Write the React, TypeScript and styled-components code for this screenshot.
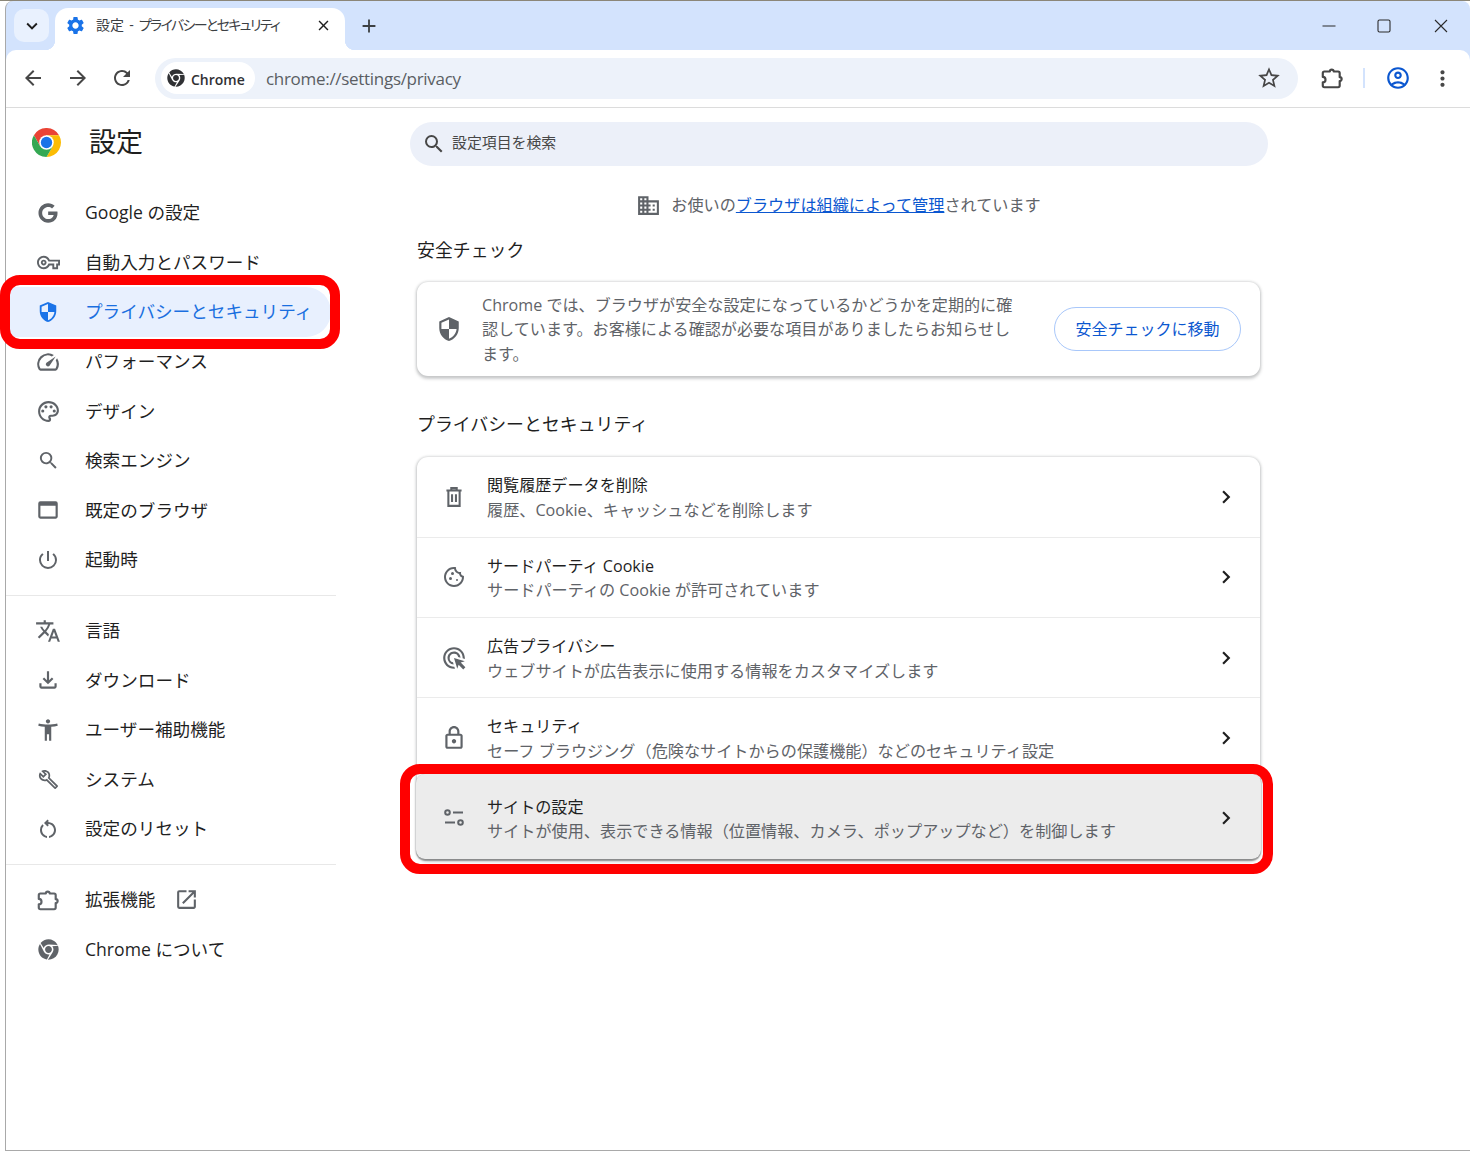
import React from "react";
import styled, { createGlobalStyle } from "styled-components";
import { FaChrome, FaGoogle } from "react-icons/fa";
import {
  MdAccessibilityNew, MdAdd, MdArrowBack, MdArrowForward, MdChevronRight, MdClose, MdDomain, MdKeyboardArrowDown,
  MdMoreVert, MdOutlineAccountCircle, MdOutlineAdsClick, MdOutlineBuild, MdOutlineCookie,
  MdOutlineFileDownload, MdOutlineLock, MdOutlineOpenInNew, MdOutlinePalette, MdOutlineRestartAlt,
  MdOutlineSpeed, MdOutlineVpnKey, MdOutlineWebAsset, MdPowerSettingsNew, MdRefresh, MdSearch, MdSecurity, MdSettings,
  MdStarBorder, MdTranslate,
} from "react-icons/md";

const Global = createGlobalStyle`
  html, body { margin: 0; padding: 0; background: #fff; }
  body { font-family: "Open Sans", "Noto Sans CJK JP", sans-serif; color: #1f1f1f; }
  * { box-sizing: border-box; }
`;

const Page = styled.div`
  position: relative;
  width: 1470px;
  height: 1152px;
  overflow: hidden;
  padding: 1px 0 0 5px;
  background: #fff;
  &::before {
    content: "";
    position: absolute;
    top: 0;
    left: 0;
    right: 0;
    height: 1px;
    background: #8b8678;
  }
`;

const Window = styled.div`
  width: 1465px;
  height: 1150px;
  display: flex;
  flex-direction: column;
  border-left: 1px solid #a9a9a9;
  border-bottom: 1px solid #a9a9a9;
  border-top-left-radius: 8px;
  border-top-right-radius: 8px;
  overflow: hidden;
  background: #d3e3fd;
`;

const TitleBar = styled.div`
  height: 49px;
  flex: none;
  display: flex;
  align-items: flex-end;
  padding-left: 8px;
  color: #1f1f1f;
`;

const TabSearch = styled.div`
  width: 35px;
  height: 33px;
  margin-bottom: 8px;
  border-radius: 10px;
  background: #e9f1fe;
  display: flex;
  align-items: center;
  justify-content: center;
`;

const Tab = styled.div`
  position: relative;
  width: 290px;
  height: 42px;
  margin-left: 6px;
  padding: 0 13px 8px 10px;
  background: #fff;
  border-radius: 13px 13px 0 0;
  display: flex;
  align-items: center;
  &::before, &::after {
    content: "";
    position: absolute;
    bottom: 0;
    width: 10px;
    height: 10px;
  }
  &::before { left: -10px; background: radial-gradient(circle at 0 0, transparent 10px, #fff 10.5px); }
  &::after { right: -10px; background: radial-gradient(circle at 100% 0, transparent 10px, #fff 10.5px); }
`;

const TabFavicon = styled(MdSettings)`
  color: #1a73e8;
  flex: none;
`;

const TabTitle = styled.span`
  margin: -2px 0 0 10px;
  flex: 1;
  font-size: 14px;
  word-spacing: 1.5px;
  color: #3c4043;
  white-space: nowrap;
`;

const TabTitleKana = styled.span`
  font-feature-settings: "palt";
  letter-spacing: -1.65px;
`;

const NewTab = styled.div`
  margin: 0 0 12px 12px;
  width: 24px;
  height: 24px;
  display: flex;
  align-items: center;
  justify-content: center;
  color: #3c4043;
`;

const WindowControls = styled.div`
  margin-left: auto;
  display: flex;
  align-items: center;
  height: 49px;
  padding-right: 21px;
  gap: 41px;
  color: #2b2b2b;
`;

const ControlIcon = styled.svg<{ $nudge?: number }>`
  width: 16px;
  height: 16px;
  display: block;
  fill: none;
  stroke: currentColor;
  stroke-width: 1.1;
  margin-right: ${(p) => p.$nudge ?? 0}px;
`;

const Toolbar = styled.div`
  height: 58px;
  flex: none;
  display: flex;
  align-items: center;
  padding: 0 15px 1px 14px;
  background: #fff;
  border-bottom: 1px solid #dcdcdc;
  border-radius: 10px 10px 0 0;
`;

const ToolIcon = styled.div<{ $gap?: number; $color?: string }>`
  width: 26px;
  height: 26px;
  margin-left: ${(p) => p.$gap ?? 0}px;
  display: flex;
  align-items: center;
  justify-content: center;
  flex: none;
  color: ${(p) => p.$color ?? "#474747"};
`;

const Omnibox = styled.div`
  width: 1143px;
  height: 41px;
  margin-left: 20px;
  flex: none;
  border-radius: 21px;
  background: #edf2fa;
  display: flex;
  align-items: center;
  padding: 0 16px 0 6px;
`;

const Chip = styled.div`
  height: 32px;
  width: 94px;
  border-radius: 16px;
  background: #fff;
  display: flex;
  align-items: center;
  gap: 6px;
  padding-left: 6px;
  font-size: 14px;
  font-weight: 600;
  color: #303134;
  span { margin-top: 2px; }
`;

const Url = styled.span`
  margin: 1px 0 0 11px;
  flex: 1;
  font-size: 17px;
  letter-spacing: -0.3px;
  color: #5a5e63;
`;

const ToolDivider = styled.div`
  width: 2px;
  height: 20px;
  margin-left: 18px;
  background: #d3e3fd;
  flex: none;
`;

const Body = styled.div`
  flex: 1;
  display: flex;
  background: #fff;
  min-height: 0;
`;

const Sidebar = styled.nav`
  width: 330px;
  flex: none;
`;

const Brand = styled.div`
  height: 80px;
  padding: 0 0 11px 26px;
  display: flex;
  align-items: center;
  gap: 28px;
  font-size: 27px;
  color: #1f1f1f;
  span { margin-top: -4px; }
`;

const NavItem = styled.div<{ $active?: boolean }>`
  height: 49.6px;
  width: ${(p) => (p.$active ? "325px" : "330px")};
  display: flex;
  align-items: center;
  padding-left: 29px;
  gap: 24px;
  font-size: 17.6px;
  color: ${(p) => (p.$active ? "#1a6fe0" : "#1f1f1f")};
  background: ${(p) => (p.$active ? "#e8f0fe" : "transparent")};
  border-radius: ${(p) => (p.$active ? "0 25px 25px 0" : "0")};
  svg { color: ${(p) => (p.$active ? "#1a73e8" : "#5f6368")}; }
`;

const NavIcon = styled.span`
  width: 26px;
  height: 26px;
  flex: none;
  display: flex;
  align-items: center;
  justify-content: center;
`;

const NavLabel = styled.span`
  margin-top: -2px;
`;

const NavDivider = styled.hr`
  margin: 10px 0;
  border: 0;
  border-top: 1px solid #e8e8e8;
`;

const ExternalIcon = styled(MdOutlineOpenInNew)`
  margin-left: -5px;
`;

const Main = styled.main`
  flex: 1;
  padding: 14px 0 0 74px;
`;

const SearchBox = styled.div`
  width: 858px;
  height: 44px;
  border-radius: 22px;
  background: #ecf0f9;
  display: flex;
  align-items: center;
  padding-left: 12px;
  gap: 6px;
  font-size: 14.9px;
  color: #474747;
  svg { color: #474747; flex: none; }
  span { margin-top: -5px; }
`;

const Column = styled.div`
  width: 843px;
  margin-left: 7px;
`;

const Managed = styled.div`
  margin-top: 26px;
  height: 26px;
  display: flex;
  justify-content: center;
  align-items: center;
  gap: 10px;
  font-size: 16.15px;
  color: #5f6368;
  svg { color: #5f6368; }
  span { margin-top: -2px; }
  a { color: #0b57d0; text-decoration: underline; }
`;

const SectionTitle = styled.h2<{ $top: number }>`
  margin: ${(p) => p.$top}px 0 0 0;
  height: 26px;
  line-height: 26px;
  font-size: 17.9px;
  font-weight: 400;
  color: #1f1f1f;
`;

const SafetyCard = styled.section`
  margin-top: 19px;
  height: 94px;
  border-radius: 11px;
  background: #fff;
  box-shadow: 0 1.5px 3px 1px rgba(60, 64, 67, 0.25), 0 0 3px rgba(60, 64, 67, 0.12);
  display: flex;
  align-items: center;
  padding: 0 19px 0 19px;
  svg { color: #5f6368; flex: none; }
`;

const SafetyText = styled.p`
  margin: 1px 0 0 20px;
  width: 535px;
  font-size: 16.1px;
  line-height: 24.6px;
  color: #5f6368;
`;

const PillButton = styled.div`
  margin-left: auto;
  width: 187px;
  height: 44px;
  padding-bottom: 2px;
  border-radius: 22px;
  border: 1.3px solid #a8c7fa;
  display: flex;
  align-items: center;
  justify-content: center;
  font-size: 16px;
  color: #0b57d0;
`;

const ListCard = styled.section`
  margin-top: 20px;
  height: 402px;
  border-radius: 11px;
  background: #fff;
  box-shadow: 0 1.5px 3px 1px rgba(60, 64, 67, 0.25), 0 0 3px rgba(60, 64, 67, 0.12);
`;

const Row = styled.div<{ $highlight?: boolean }>`
  position: relative;
  height: ${(p) => (p.$highlight ? "85px" : "80.3px")};
  margin: ${(p) => (p.$highlight ? "-3px -1px 0" : "0")};
  padding: ${(p) => (p.$highlight ? "3px 22px 0 15px" : "0 21px 0 14px")};
  display: flex;
  align-items: center;
  gap: 13px;
  background: ${(p) => (p.$highlight ? "#ececec" : "transparent")};
  border-top: ${(p) => (p.$highlight ? "0" : "1px solid #ebebeb")};
  border-radius: ${(p) => (p.$highlight ? "9px" : "0")};
  box-shadow: ${(p) => (p.$highlight ? "0 0 2px rgba(0,0,0,.3), 0 2px 1px rgba(0,0,0,.25)" : "none")};
  &:first-child { border-top: 0; height: 79.6px; }
`;

const RowIcon = styled.div`
  width: 46px;
  display: flex;
  justify-content: center;
  flex: none;
  color: #5f6368;
`;

const RowText = styled.div`
  flex: 1;
  margin-left: -3px;
  padding-top: 2px;
`;

const RowTitle = styled.div`
  font-size: 16.1px;
  line-height: 24.6px;
  color: #1f1f1f;
`;

const RowSub = styled.div`
  font-size: 16.15px;
  line-height: 24.6px;
  color: #5f6368;
`;

const Chevron = styled(MdChevronRight)`
  color: #1f1f1f;
  flex: none;
`;

const Annotation = styled.div<{ $x: number; $y: number; $w: number; $h: number }>`
  position: absolute;
  left: ${(p) => p.$x}px;
  top: ${(p) => p.$y}px;
  width: ${(p) => p.$w}px;
  height: ${(p) => p.$h}px;
  border: 10px solid #ff0000;
  border-radius: 20px;
  pointer-events: none;
`;

const ChromeLogo = () => (
  <svg width="29" height="29" viewBox="0 0 24 24" aria-hidden="true">
    <path d="M1.6 6A12 12 0 0 1 22.39 6H12L6.8 15Z" fill="#ea4335" />
    <path d="M22.39 6A12 12 0 0 1 12 24L17.2 15 12 6Z" fill="#fbbc04" />
    <path d="M12 24A12 12 0 0 1 1.6 6L6.8 15H17.2Z" fill="#34a853" />
    <circle cx="12" cy="12" r="6" fill="#fff" />
    <circle cx="12" cy="12" r="4.7" fill="#1a73e8" />
  </svg>
);

const SiteSettingsIcon = () => (
  <svg width="24" height="24" viewBox="0 0 24 24" fill="none" stroke="currentColor" strokeWidth="2" aria-hidden="true">
    <circle cx="5.5" cy="6.5" r="2.3" />
    <path d="M11 6.5h10" />
    <circle cx="18.5" cy="16.5" r="2.3" />
    <path d="M3 16.5h10" />
  </svg>
);

const ExtensionIcon = ({ size = 26 }: { size?: number }) => (
  <svg width={size} height={size} viewBox="0 0 24 24" fill="none" stroke="currentColor" strokeWidth="2" strokeLinejoin="round" aria-hidden="true">
    <path d="M5 6h5a1.8 1.8 0 0 1 3.6 0h4a1.5 1.5 0 0 1 1.5 1.5v3.7a1.8 1.8 0 0 1 0 3.6v4.2a1.5 1.5 0 0 1-1.5 1.5H5a1.5 1.5 0 0 1-1.5-1.5v-3a2.5 2.5 0 0 0 0-5V7.5A1.5 1.5 0 0 1 5 6Z" />
  </svg>
);

const TrashIcon = () => (
  <svg width="26" height="26" viewBox="0 0 24 24" fill="none" stroke="currentColor" strokeWidth="1.9" aria-hidden="true">
    <path d="M5 6h14M9.5 6V3.8h5V6M6.8 6v14.2h10.4V6M10.2 9.5v7.2M13.8 9.5v7.2" />
  </svg>
);

const navTop: [React.ReactNode, string, boolean?][] = [
  [<FaGoogle size={20} />, "Google の設定"],
  [<MdOutlineVpnKey size={23} />, "自動入力とパスワード"],
  [<MdSecurity size={22} />, "プライバシーとセキュリティ", true],
  [<MdOutlineSpeed size={26} />, "パフォーマンス"],
  [<MdOutlinePalette size={25} />, "デザイン"],
  [<MdSearch size={23} />, "検索エンジン"],
  [<MdOutlineWebAsset size={26} />, "既定のブラウザ"],
  [<MdPowerSettingsNew size={24} />, "起動時"],
];

const navMid: [React.ReactNode, string][] = [
  [<MdTranslate size={26} />, "言語"],
  [<MdOutlineFileDownload size={26} />, "ダウンロード"],
  [<MdAccessibilityNew size={26} />, "ユーザー補助機能"],
  [<MdOutlineBuild size={21} />, "システム"],
  [<MdOutlineRestartAlt size={24} />, "設定のリセット"],
];

const rows: [React.ReactNode, string, string][] = [
  [<TrashIcon />, "閲覧履歴データを削除", "履歴、Cookie、キャッシュなどを削除します"],
  [<MdOutlineCookie size={24} />, "サードパーティ Cookie", "サードパーティの Cookie が許可されています"],
  [<MdOutlineAdsClick size={26} />, "広告プライバシー", "ウェブサイトが広告表示に使用する情報をカスタマイズします"],
  [<MdOutlineLock size={26} />, "セキュリティ", "セーフ ブラウジング（危険なサイトからの保護機能）などのセキュリティ設定"],
];

export default function App() {
  return (
    <Page>
      <Global />
      <Window>
        <TitleBar>
          <TabSearch>
            <MdKeyboardArrowDown size={22} />
          </TabSearch>
          <Tab>
            <TabFavicon size={21} />
            <TabTitle>設定 - <TabTitleKana>プライバシーとセキュリティ</TabTitleKana></TabTitle>
            <MdClose size={17} />
          </Tab>
          <NewTab>
            <MdAdd size={22} />
          </NewTab>
          <WindowControls>
            <ControlIcon viewBox="0 0 16 16" $nudge={-2}><path d="M1.5 8h13" /></ControlIcon>
            <ControlIcon viewBox="0 0 16 16"><rect x="2" y="2" width="12" height="12" rx="1.5" /></ControlIcon>
            <ControlIcon viewBox="0 0 16 16"><path d="M2 2l12 12M14 2L2 14" /></ControlIcon>
          </WindowControls>
        </TitleBar>
        <Toolbar>
          <ToolIcon><MdArrowBack size={24} /></ToolIcon>
          <ToolIcon $gap={19}><MdArrowForward size={24} /></ToolIcon>
          <ToolIcon $gap={18}><MdRefresh size={24} /></ToolIcon>
          <Omnibox>
            <Chip>
              <FaChrome size={18} />
              <span>Chrome</span>
            </Chip>
            <Url>chrome://settings/privacy</Url>
            <MdStarBorder size={26} color="#474747" />
          </Omnibox>
          <ToolIcon $gap={21}><ExtensionIcon /></ToolIcon>
          <ToolDivider />
          <ToolIcon $gap={20} $color="#0b57d0"><MdOutlineAccountCircle size={26} /></ToolIcon>
          <ToolIcon $gap={18}><MdMoreVert size={25} /></ToolIcon>
        </Toolbar>
        <Body>
          <Sidebar>
            <Brand>
              <ChromeLogo />
              <span>設定</span>
            </Brand>
            {navTop.map(([icon, label, active]) => (
              <NavItem key={label} $active={active}>
                <NavIcon>{icon}</NavIcon>
                <NavLabel>{label}</NavLabel>
              </NavItem>
            ))}
            <NavDivider />
            {navMid.map(([icon, label]) => (
              <NavItem key={label}>
                <NavIcon>{icon}</NavIcon>
                <NavLabel>{label}</NavLabel>
              </NavItem>
            ))}
            <NavDivider />
            <NavItem>
              <NavIcon><ExtensionIcon /></NavIcon>
              <NavLabel>拡張機能</NavLabel>
              <ExternalIcon size={25} />
            </NavItem>
            <NavItem>
              <NavIcon><FaChrome size={21} /></NavIcon>
              <NavLabel>Chrome について</NavLabel>
            </NavItem>
          </Sidebar>
          <Main>
            <SearchBox>
              <MdSearch size={24} />
              <span>設定項目を検索</span>
            </SearchBox>
            <Column>
              <Managed>
                <MdDomain size={25} />
                <span>お使いの<a>ブラウザは組織によって管理</a>されています</span>
              </Managed>
              <SectionTitle $top={19}>安全チェック</SectionTitle>
              <SafetyCard>
                <MdSecurity size={26} />
                <SafetyText>
                  Chrome では、ブラウザが安全な設定になっているかどうかを定期的に確認しています。お客様による確認が必要な項目がありましたらお知らせします。
                </SafetyText>
                <PillButton>安全チェックに移動</PillButton>
              </SafetyCard>
              <SectionTitle $top={35}>プライバシーとセキュリティ</SectionTitle>
              <ListCard>
                {rows.map(([icon, title, sub]) => (
                  <Row key={title}>
                    <RowIcon>{icon}</RowIcon>
                    <RowText>
                      <RowTitle>{title}</RowTitle>
                      <RowSub>{sub}</RowSub>
                    </RowText>
                    <Chevron size={26} />
                  </Row>
                ))}
                <Row $highlight>
                  <RowIcon><SiteSettingsIcon /></RowIcon>
                  <RowText>
                    <RowTitle>サイトの設定</RowTitle>
                    <RowSub>サイトが使用、表示できる情報（位置情報、カメラ、ポップアップなど）を制御します</RowSub>
                  </RowText>
                  <Chevron size={26} />
                </Row>
              </ListCard>
            </Column>
          </Main>
        </Body>
      </Window>
      <Annotation $x={0} $y={275} $w={340} $h={74} />
      <Annotation $x={400} $y={764} $w={873} $h={110} />
    </Page>
  );
}
